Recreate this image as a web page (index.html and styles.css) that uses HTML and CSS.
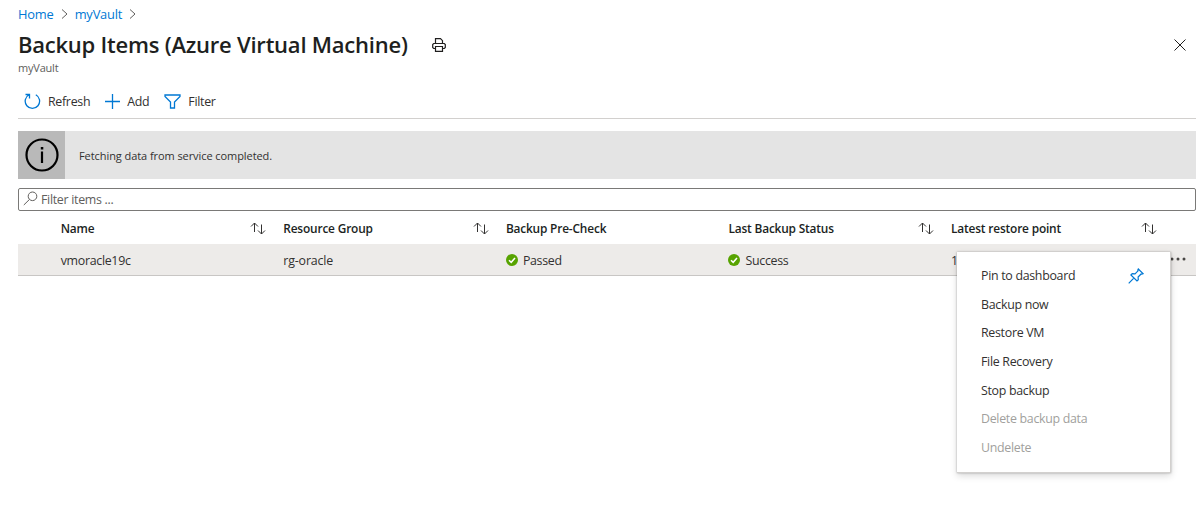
FILE: index.html
```html
<!DOCTYPE html>
<html lang="en">
<head>
<meta charset="utf-8">
<title>Backup Items</title>
<link rel="stylesheet" href="styles.css">
</head>
<body>
<main class="blade">
  <nav class="breadcrumb">
    <a class="crumb crumb-home">Home</a>
    <svg class="chevron" width="8" height="10" viewBox="0 0 8 10"><path d="M1 .5 6 5 1 9.500"/></svg>
    <a class="crumb crumb-vault">myVault</a>
    <svg class="chevron" width="8" height="10" viewBox="0 0 8 10"><path d="M1 .5 6 5 1 9.500"/></svg>
  </nav>
  <header class="heading">
    <h1 class="title">Backup Items (Azure Virtual Machine)</h1>
    <svg class="print" width="14" height="14" viewBox="0 0 14 14"><path d="M3.500 6V.7h5L10.500 2.700V6M3.500 10.500H1.700L.7 9.500V6.500L1.700 5.500h10.600l1 1v3l-1 1h-1.800M3.500 8.500h7v4.800h-7z"/></svg>
    <svg class="close" width="12" height="12" viewBox="0 0 12 12"><path d="M.5.5l11 11M11.500.5l-11 11"/></svg>
  </header>
  <p class="subtitle">myVault</p>
  <div class="toolbar">
    <div class="command refresh">
      <svg class="icon" width="17" height="17" viewBox="0 0 17 17"><path d="M5 1.800A7.200 7.200 0 1 0 11.800 1.800M1.500 1.500H5.500V5.500"/></svg>
      <span>Refresh</span>
    </div>
    <div class="command add">
      <svg class="icon" width="15" height="15" viewBox="0 0 15 15"><path d="M7.500 0v15M0 7.500h15"/></svg>
      <span>Add</span>
    </div>
    <div class="command filter">
      <svg class="icon" width="17" height="15" viewBox="0 0 17 15"><path d="M1 1h15v1.500L10.500 8v6h-4V8L1 2.500z"/></svg>
      <span>Filter</span>
    </div>
  </div>
  <section class="banner">
    <div class="banner-icon">
      <svg width="34" height="34" viewBox="0 0 34 34"><circle cx="17" cy="17" r="15.500" fill="none" stroke="#000" stroke-width="2.200"/><path d="M15.800 9h2.500v2.500h-2.500zM15.900 13.500h2.200V25h-2.200z"/></svg>
    </div>
    <span class="banner-text">Fetching data from service completed.</span>
  </section>
  <div class="search">
    <svg width="15" height="15" viewBox="0 0 15 15"><circle cx="9.500" cy="5.300" r="4.300"/><path d="M6.500 8.400.8 14"/></svg>
    <span class="placeholder">Filter items ...</span>
  </div>
  <section class="grid">
    <div class="row head">
      <div class="cell"><span>Name</span><svg class="sort" width="16" height="13" viewBox="0 0 16 13"><path d="M4.500 10V1M1 4.500 4.500 1 8 4.500M11.500 2.500V12M8 8.500l3.500 3.500L15 8.500"/></svg></div>
      <div class="cell"><span>Resource Group</span><svg class="sort" width="16" height="13" viewBox="0 0 16 13"><path d="M4.500 10V1M1 4.500 4.500 1 8 4.500M11.500 2.500V12M8 8.500l3.500 3.500L15 8.500"/></svg></div>
      <div class="cell"><span>Backup Pre-Check</span></div>
      <div class="cell"><span>Last Backup Status</span><svg class="sort" width="16" height="13" viewBox="0 0 16 13"><path d="M4.500 10V1M1 4.500 4.500 1 8 4.500M11.500 2.500V12M8 8.500l3.500 3.500L15 8.500"/></svg></div>
      <div class="cell"><span>Latest restore point</span><svg class="sort" width="16" height="13" viewBox="0 0 16 13"><path d="M4.500 10V1M1 4.500 4.500 1 8 4.500M11.500 2.500V12M8 8.500l3.500 3.500L15 8.500"/></svg></div>
    </div>
    <div class="row item">
      <div class="cell"><span>vmoracle19c</span></div>
      <div class="cell"><span class="group-value">rg-oracle</span></div>
      <div class="cell"><svg class="ok" width="12" height="12" viewBox="0 0 12 12"><circle cx="6" cy="6" r="6" fill="#57a300"/><path d="M3 6.200 5.200 8.300 9 3.900"/></svg><span>Passed</span></div>
      <div class="cell"><svg class="ok" width="12" height="12" viewBox="0 0 12 12"><circle cx="6" cy="6" r="6" fill="#57a300"/><path d="M3 6.200 5.200 8.300 9 3.900"/></svg><span>Success</span></div>
      <div class="cell"><span>1</span></div>
      <svg class="more" width="16" height="4" viewBox="0 0 16 4"><circle cx="2" cy="2" r="1.500"/><circle cx="8" cy="2" r="1.500"/><circle cx="14" cy="2" r="1.500"/></svg>
    </div>
  </section>
  <div class="menu">
    <div class="option"><span>Pin to dashboard</span><svg class="pin" width="16" height="16" viewBox="0 0 16 16"><path d="M10.300 1 15 5.700l-1.200.5-.7-.2-3 3 .2 2.800-1.300 1.200L2.900 6.900 4.200 5.700 7 5.900l3-3-.2-.8zM5.800 10.100.7 15.300"/></svg></div>
    <div class="option"><span>Backup now</span></div>
    <div class="option"><span>Restore VM</span></div>
    <div class="option"><span>File Recovery</span></div>
    <div class="option"><span>Stop backup</span></div>
    <div class="option disabled"><span>Delete backup data</span></div>
    <div class="option disabled"><span>Undelete</span></div>
  </div>
</main>
</body>
</html>
```
FILE: styles.css
```css
* { box-sizing: border-box; }
body {
  margin: 0;
  background: #fff;
  color: #323130;
  font: 12.4px/18px "Open Sans", "Noto Sans", sans-serif;
  letter-spacing: -.3px;
  white-space: nowrap;
}
svg { display: block; flex: none; fill: none; }
.blade { height: 518px; padding: 4px 4px 0 18px; overflow: hidden; }
.breadcrumb { display: flex; align-items: center; height: 20px; color: #0078d4; font-size: 12.9px; letter-spacing: -.2px; }
.chevron { margin: -1px 6px 0 7px; stroke: #605e5c; }
.heading { display: flex; align-items: center; height: 37px; margin-top: 2px; }
.title { margin: -2px 0 0; font-size: 22px; line-height: 30px; font-weight: 600; letter-spacing: -.23px; color: #201f1e; }
.print { margin-left: 24px; margin-top: 1px; stroke: #201f1e; stroke-width: 1.200; }
.close { margin-left: auto; margin-right: 10px; stroke: #201f1e; }
.subtitle { margin: 0; height: 11px; line-height: 10px; font-size: 11px; letter-spacing: -.2px; color: #605e5c; }
.toolbar { display: flex; align-items: center; height: 45px; padding: 10px 0 0 6px; border-bottom: 1px solid #d2d0ce; }
.command { display: flex; align-items: center; gap: 7px; }
.command span { padding-top: 1px; }
.add { margin-left: 15px; }
.filter { margin-left: 15px; }
.icon { stroke: #0078d4; stroke-width: 1.300; }
.banner { display: flex; align-items: center; height: 48px; margin-top: 12px; background: #e4e4e4; font-size: 11px; letter-spacing: -.07px; }
.banner-icon { display: grid; place-items: center; width: 47px; height: 48px; background: #b9b9b9; }
.banner-icon path { fill: #000; }
.banner-text { margin-left: 14px; padding-top: 1px; }
.search { display: flex; align-items: center; gap: 3px; height: 23px; margin-top: 9px; padding-left: 4px; border: 1px solid #7a7977; border-radius: 2px; color: #605e5c; }
.search svg { stroke: #605e5c; margin-top: -2px; }
.row { display: grid; grid-template-columns: repeat(4, 222.600px) 214px 1fr; padding-left: 42.700px; align-items: center; }
.head { height: 33px; color: #201f1e; font-size: 11.900px; font-weight: 600; letter-spacing: -.18px; }
.item { height: 32px; background: #edebe9; border-bottom: 1px solid #c8c6c4; }
.item span { padding-top: 2px; }
.item .group-value { letter-spacing: -.15px; }
.cell { display: flex; align-items: center; }
.sort { margin-left: auto; margin-right: 17px; margin-top: 1px; stroke: #323130; }
.cell:nth-child(5) .sort { margin-right: 8px; }
.ok { margin-right: 5px; }
.ok path { stroke: #fff; stroke-width: 1.500; }
.more { margin-left: 5px; margin-top: -2px; fill: #484644; }
.menu { position: absolute; left: 957px; top: 252px; width: 214px; height: 221px; padding: 10px 26px 0 24px; background: #fff; border: 1px solid #d2d0ce; border-width: 0 1px 1px 0; box-shadow: 0 0 2px rgba(0,0,0,.3), 0 3px 7px rgba(0,0,0,.14); }
.option { display: flex; align-items: center; justify-content: space-between; height: 28.600px; }
.disabled { color: #a19f9d; }
.pin { stroke: #0078d4; stroke-width: 1.200; }
```
